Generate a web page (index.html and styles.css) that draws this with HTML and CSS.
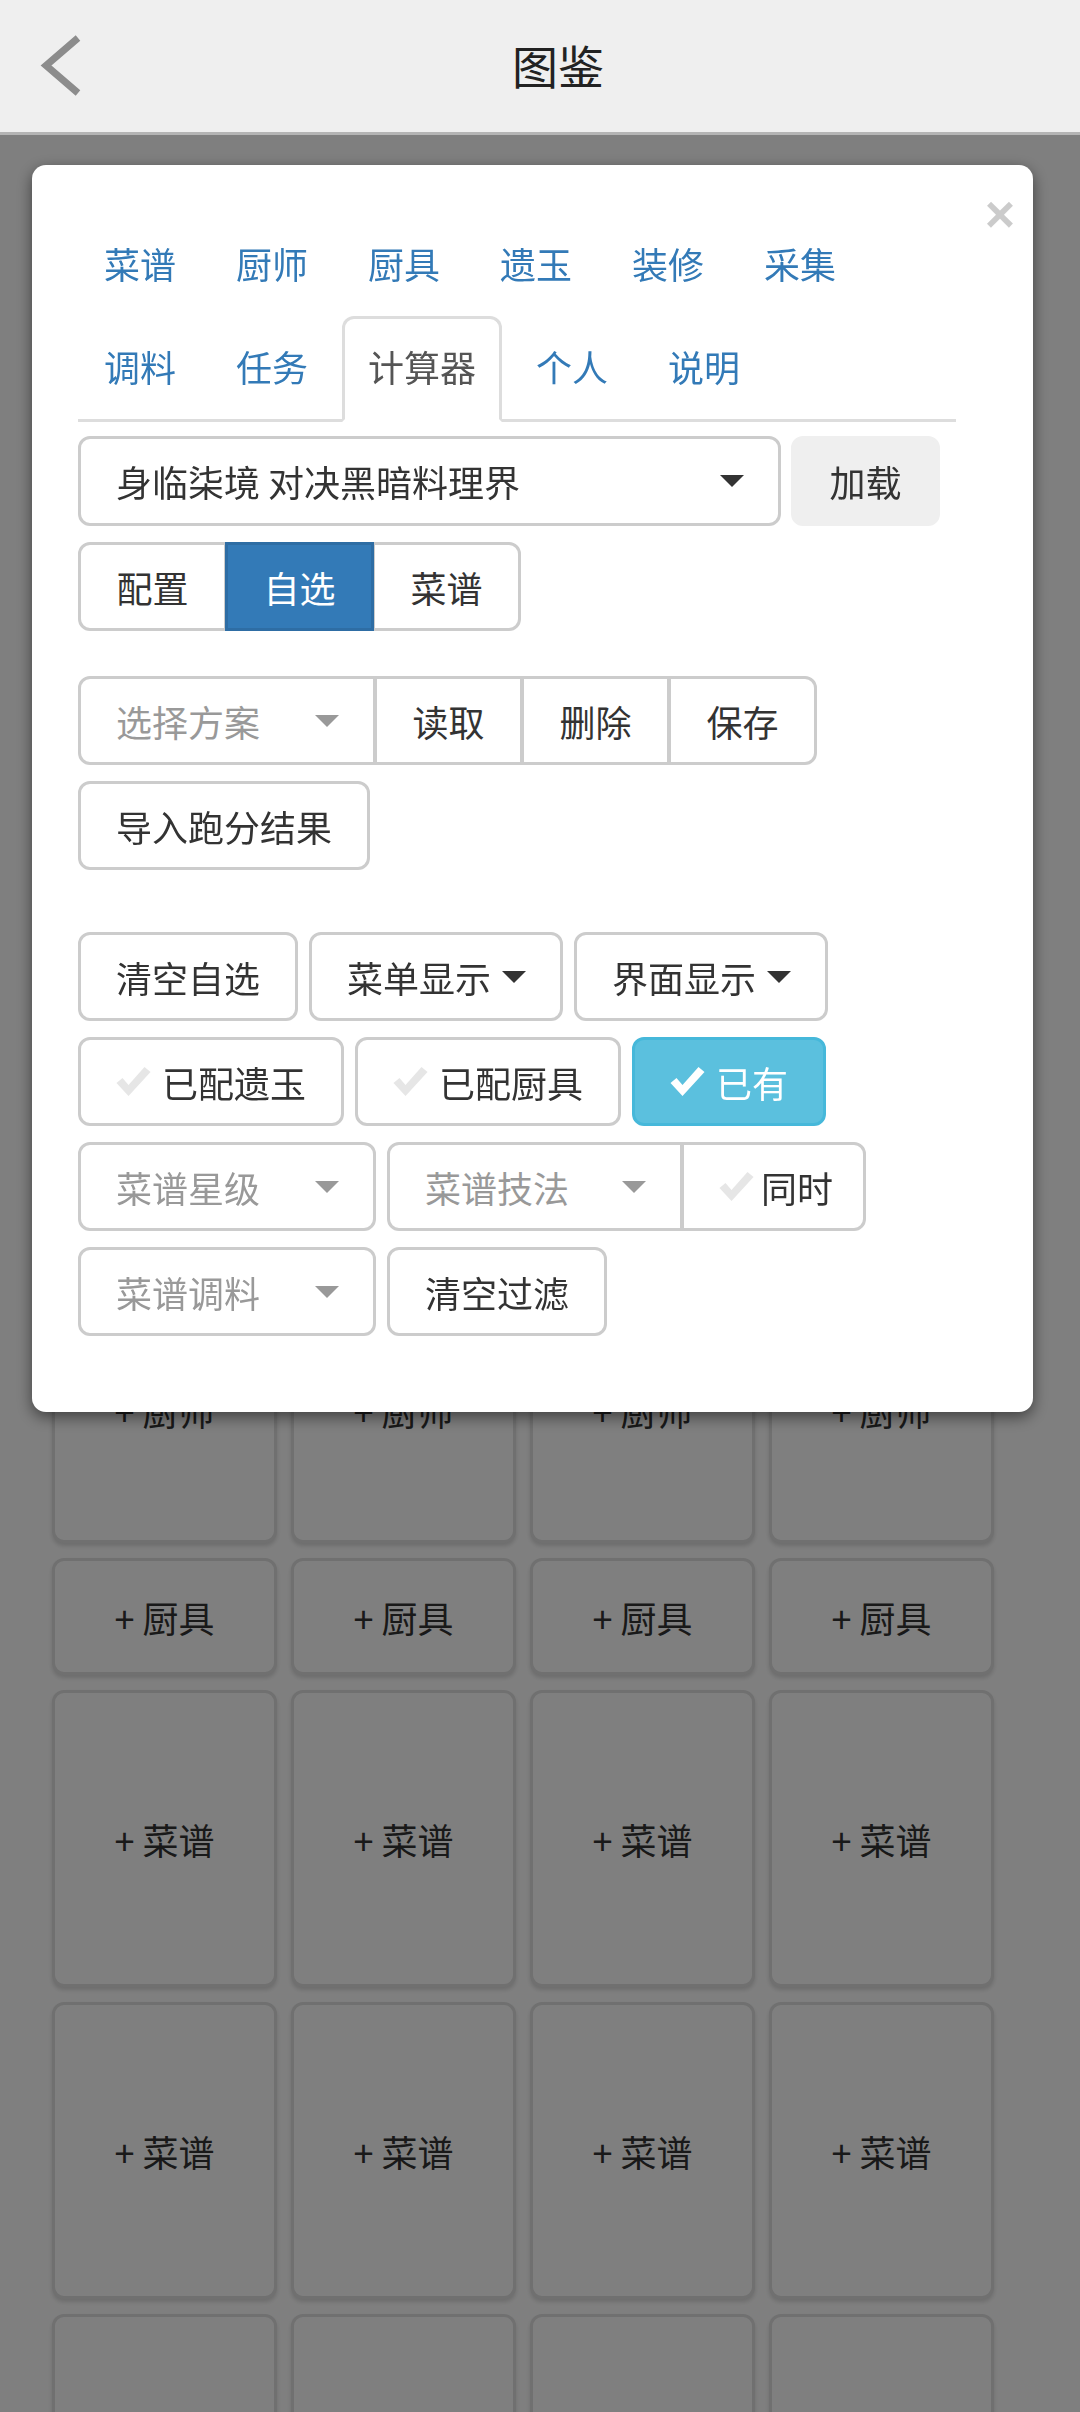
FILE: index.html
```html
<!DOCTYPE html>
<html lang="zh-CN">
<head>
<meta charset="utf-8">
<title>图鉴</title>
<link rel="stylesheet" href="styles.css">
</head>
<body>
<header class="topbar">
  <svg class="back" width="44" height="64" viewBox="0 0 44 64"><polyline points="38,4 6,31.5 38,59" fill="none" stroke="#8c8c8c" stroke-width="7"/></svg>
  <h1 class="title">图鉴</h1>
  <span></span>
</header>

<main class="board">
  <div class="card chef">+ 厨师</div><div class="card chef">+ 厨师</div><div class="card chef">+ 厨师</div><div class="card chef">+ 厨师</div>
  <div class="card tool">+ 厨具</div><div class="card tool">+ 厨具</div><div class="card tool">+ 厨具</div><div class="card tool">+ 厨具</div>
  <div class="card recipe">+ 菜谱</div><div class="card recipe">+ 菜谱</div><div class="card recipe">+ 菜谱</div><div class="card recipe">+ 菜谱</div>
  <div class="card recipe">+ 菜谱</div><div class="card recipe">+ 菜谱</div><div class="card recipe">+ 菜谱</div><div class="card recipe">+ 菜谱</div>
  <div class="card recipe"></div><div class="card recipe"></div><div class="card recipe"></div><div class="card recipe"></div>
</main>

<div class="backdrop"></div>

<div class="modal-wrap">
  <div class="modal">
    <button class="close">×</button>
    <ul class="tabs">
      <li><a>菜谱</a></li>
      <li><a>厨师</a></li>
      <li><a>厨具</a></li>
      <li><a>遗玉</a></li>
      <li><a>装修</a></li>
      <li><a>采集</a></li>
      <li><a>调料</a></li>
      <li><a>任务</a></li>
      <li class="active"><a>计算器</a></li>
      <li><a>个人</a></li>
      <li><a>说明</a></li>
    </ul>

    <div class="row first">
      <div class="select big"><span>身临柒境 对决黑暗料理界</span><i class="caret"></i></div>
      <button class="btn load">加载</button>
    </div>

    <div class="row">
      <div class="group">
        <button class="btn">配置</button>
        <button class="btn primary">自选</button>
        <button class="btn">菜谱</button>
      </div>
    </div>

    <div class="row gap45">
      <div class="group">
        <div class="select placeholder"><span>选择方案</span><i class="caret"></i></div>
        <button class="btn">读取</button>
        <button class="btn">删除</button>
        <button class="btn">保存</button>
      </div>
    </div>

    <div class="row">
      <button class="btn">导入跑分结果</button>
    </div>

    <div class="row gap62">
      <button class="btn">清空自选</button>
      <button class="btn">菜单显示<i class="caret inline"></i></button>
      <button class="btn">界面显示<i class="caret inline"></i></button>
    </div>

    <div class="row">
      <button class="btn"><svg class="check" viewBox="0 0 34 29"><path d="M0 16 L6 11 L12 18 L28 0 L34 5 L12 29 Z"/></svg>已配遗玉</button>
      <button class="btn"><svg class="check" viewBox="0 0 34 29"><path d="M0 16 L6 11 L12 18 L28 0 L34 5 L12 29 Z"/></svg>已配厨具</button>
      <button class="btn info"><svg class="check" viewBox="0 0 34 29"><path d="M0 16 L6 11 L12 18 L28 0 L34 5 L12 29 Z"/></svg>已有</button>
    </div>

    <div class="row">
      <div class="select placeholder"><span>菜谱星级</span><i class="caret"></i></div>
      <div class="group">
        <div class="select placeholder skill"><span>菜谱技法</span><i class="caret"></i></div>
        <button class="btn both"><svg class="check" viewBox="0 0 34 29"><path d="M0 16 L6 11 L12 18 L28 0 L34 5 L12 29 Z"/></svg>同时</button>
      </div>
    </div>

    <div class="row">
      <div class="select placeholder"><span>菜谱调料</span><i class="caret"></i></div>
      <button class="btn">清空过滤</button>
    </div>
  </div>
</div>
</body>
</html>
```

FILE: styles.css
```css
html, body {
  margin: 0;
  padding: 0;
  height: 100%;
  overflow: hidden;
}
body {
  background: #fff;
  font-family: "Noto Sans CJK SC", "Noto Sans", sans-serif;
  color: #333;
}

/* header */
.topbar {
  position: relative;
  z-index: 20;
  height: 132px;
  background: #efefef;
  border-bottom: 3px solid #b4b4b4;
  display: grid;
  grid-template-columns: 1fr auto 1fr;
  align-items: center;
  padding-left: 36px;
}
.back {
  display: block;
  margin-left: 4px;
}
.title {
  margin: -5px 0 0;
  font-size: 46px;
  font-weight: normal;
  color: #222;
  line-height: 1;
}

/* page board */
.board {
  display: grid;
  grid-template-columns: repeat(4, 225px);
  column-gap: 14px;
  row-gap: 15px;
  padding: 1165px 0 0 52px;
}
.card {
  background: #fff;
  border: 3px solid #e0e0e0;
  border-radius: 12px;
  box-shadow: 0 3px 4px rgba(0,0,0,0.15);
  box-sizing: border-box;
  font-size: 36px;
  color: #333;
  display: flex;
  justify-content: center;
  align-items: center;
}
.card.chef {
  height: 243px;
  align-items: flex-start;
  padding-top: 82px;
  line-height: 50px;
}
.card.tool { height: 117px; }
.card.recipe { height: 297px; }

.backdrop {
  position: fixed;
  inset: 0;
  background: rgba(0,0,0,0.5);
  z-index: 10;
}

/* modal */
.modal-wrap {
  position: fixed;
  inset: 0;
  z-index: 15;
}
.modal {
  position: relative;
  width: 1001px;
  box-sizing: border-box;
  margin: 165px 0 0 32px;
  background: #fff;
  border-radius: 14px;
  box-shadow: 0 5px 15px rgba(0,0,0,0.5);
  padding: 48px 77px 76px 46px;
}
.close {
  position: absolute;
  top: 23px;
  right: 18px;
  border: 0;
  background: none;
  padding: 0;
  font-family: "Liberation Sans", Arial, sans-serif;
  font-weight: bold;
  font-size: 52px;
  line-height: 52px;
  color: #000;
  opacity: 0.2;
}

.tabs {
  list-style: none;
  margin: 0;
  padding: 0;
  display: flex;
  flex-wrap: wrap;
  border-bottom: 3px solid #ddd;
}
.tabs li {
  margin-bottom: -3px;
}
.tabs a {
  display: block;
  padding: 0 23px 6px;
  margin-right: 8px;
  line-height: 94px;
  font-size: 36px;
  color: #337ab7;
  border: 3px solid transparent;
  border-radius: 12px 12px 0 0;
}
.tabs li.active a {
  color: #555;
  background: #fff;
  border-color: #ddd #ddd transparent;
}

/* rows */
.row {
  display: flex;
  gap: 11px;
  margin-top: 16px;
}
.row.first { margin-top: 14px; gap: 10px; }
.row.gap45 { margin-top: 45px; }
.row.gap62 { margin-top: 62px; }

.btn, .select {
  height: 89px;
  box-sizing: border-box;
  border: 3px solid #ccc;
  border-radius: 12px;
  background: #fff;
  color: #333;
  font-family: inherit;
  font-size: 36px;
  padding: 0 35px;
  display: inline-flex;
  align-items: center;
  white-space: nowrap;
  margin: 0;
}
.select {
  width: 298px;
  justify-content: space-between;
}
.select.skill {
  width: 296px;
}
.select.big {
  width: 703px;
  height: 90px;
}
.btn.load {
  height: 90px;
  width: 149px;
  justify-content: center;
  background: #efefef;
  border-color: #efefef;
}
.select.placeholder { color: #999; }

.caret {
  display: inline-block;
  width: 0;
  height: 0;
  border-top: 12px solid #333;
  border-left: 12px solid transparent;
  border-right: 12px solid transparent;
  margin-right: -1px;
}
.select.placeholder .caret { border-top-color: #999; }
.caret.inline {
  margin-left: 11px;
}

.group {
  display: flex;
}
.group > * {
  position: relative;
  border-radius: 0;
}
.group > .btn {
  padding: 0 35.5px;
}
.group > .btn.both {
  padding: 0 30px 0 35px;
}
.group > * + * {
  margin-left: -2px;
}
.group > :first-child { border-radius: 12px 0 0 12px; }
.group > :last-child { border-radius: 0 12px 12px 0; }

.btn.primary {
  background: #337ab7;
  border-color: #2e6da4;
  color: #fff;
  z-index: 1;
}
.btn.info {
  background: #5bc0de;
  border-color: #46b8da;
  color: #fff;
}

.check {
  width: 35px;
  height: 29px;
  margin-right: 11px;
  fill: #e6e6e6;
  flex: none;
}
.btn.both .check { margin-right: 7px; }
.btn.info .check { fill: #fff; }
```
